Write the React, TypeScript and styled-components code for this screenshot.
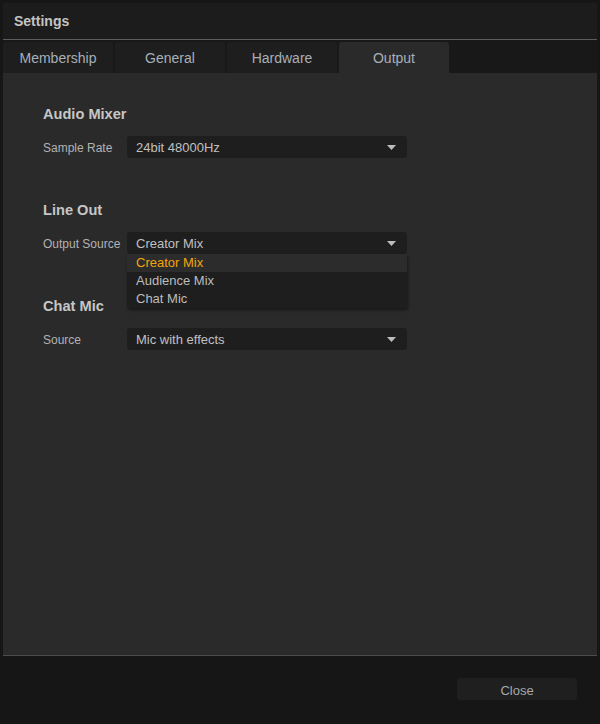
import React from "react";
import styled, { createGlobalStyle } from "styled-components";

const GlobalStyle = createGlobalStyle`
    html, body {
        margin: 0;
        padding: 0;
        background: #161616;
    }
    body {
        font-family: "Liberation Sans", Arial, sans-serif;
    }
`;

const Window = styled.div`
    width: 600px;
    height: 724px;
    display: flex;
    flex-direction: column;
    background: #161616;
    overflow: hidden;
`;

const TitleBar = styled.div`
    margin: 3px 3px 0;
    height: 36px;
    display: flex;
    align-items: center;
    padding-left: 11px;
    background: #1c1c1c;
    color: #c4c4c4;
    font-size: 14px;
    font-weight: bold;
`;

const Rule = styled.div`
    margin: 0 3px;
    height: 1px;
    background: #5c5c5c;
`;

const TabRow = styled.div`
    margin: 0 3px;
    padding-top: 2px;
    display: flex;
    gap: 2px;
    background: #181818;
`;

const Tab = styled.div<{ $active?: boolean }>`
    width: 110px;
    height: 31px;
    display: flex;
    align-items: center;
    justify-content: center;
    border-radius: 3px 3px 0 0;
    background: ${(p) => (p.$active ? "#2a2a2a" : "#1e1e1e")};
    color: #a7afb8;
    font-size: 14px;
`;

const Panel = styled.div`
    margin: 0 3px;
    height: 583px;
    padding: 32px 40px 0;
    box-sizing: border-box;
    background: #2a2a2a;
    border-bottom: 1px solid #4c4c4c;
    display: flex;
    flex-direction: column;
    gap: 43px;
`;

const Section = styled.div`
    display: flex;
    flex-direction: column;
    gap: 13px;
`;

const Heading = styled.div`
    height: 18px;
    line-height: 18px;
    color: #c6c6c6;
    font-size: 14.6px;
    font-weight: bold;
`;

const Row = styled.div`
    display: flex;
    align-items: center;
    height: 22px;
`;

const Label = styled.div`
    width: 84px;
    padding-top: 2px;
    color: #b2b2b2;
    font-size: 12px;
`;

const SelectWrap = styled.div`
    position: relative;
    width: 280px;
`;

const SelectBox = styled.div`
    height: 22px;
    display: flex;
    align-items: center;
    justify-content: space-between;
    padding: 0 11px 0 9px;
    box-sizing: border-box;
    border-radius: 3px;
    background: #1e1e1e;
    color: #c0c0c0;
    font-size: 13px;
`;

const Menu = styled.div`
    position: absolute;
    top: 22px;
    left: 0;
    right: 0;
    z-index: 2;
    background: #1e1e1e;
    box-shadow: 1px 2px 3px rgba(0, 0, 0, 0.45);
`;

const MenuItem = styled.div<{ $selected?: boolean }>`
    height: 18px;
    line-height: 18px;
    padding-left: 9px;
    font-size: 13px;
    color: ${(p) => (p.$selected ? "#f2a50c" : "#bcbcbc")};
    background: ${(p) => (p.$selected ? "#2c2c2c" : "transparent")};
`;

const Footer = styled.div`
    flex: 1;
    display: flex;
    justify-content: flex-end;
    align-items: flex-start;
    padding: 22px 23px 0 0;
`;

const CloseButton = styled.button`
    width: 120px;
    height: 22px;
    border: none;
    border-radius: 3px;
    background: #1f1f1f;
    color: #a8a8a8;
    font-family: "Liberation Sans", Arial, sans-serif;
    font-size: 13px;
    padding: 2px 0 0;
`;

const Caret = () => (
    <svg width="9" height="5" viewBox="0 0 9 5">
        <path d="M0 0H9L4.5 5Z" fill="#bdbdbd" />
    </svg>
);

const Select = ({
    value,
    options,
}: {
    value: string;
    options?: string[];
}) => (
    <SelectWrap>
        <SelectBox>
            <span>{value}</span>
            <Caret />
        </SelectBox>
        {options && (
            <Menu>
                {options.map((o) => (
                    <MenuItem key={o} $selected={o === value}>
                        {o}
                    </MenuItem>
                ))}
            </Menu>
        )}
    </SelectWrap>
);

const tabs = ["Membership", "General", "Hardware", "Output"];

export default function App() {
    return (
        <Window>
            <GlobalStyle />
            <TitleBar>Settings</TitleBar>
            <Rule />
            <TabRow>
                {tabs.map((t) => (
                    <Tab key={t} $active={t === "Output"}>
                        {t}
                    </Tab>
                ))}
            </TabRow>
            <Panel>
                <Section>
                    <Heading>Audio Mixer</Heading>
                    <Row>
                        <Label>Sample Rate</Label>
                        <Select value="24bit 48000Hz" />
                    </Row>
                </Section>
                <Section>
                    <Heading>Line Out</Heading>
                    <Row>
                        <Label>Output Source</Label>
                        <Select
                            value="Creator Mix"
                            options={["Creator Mix", "Audience Mix", "Chat Mic"]}
                        />
                    </Row>
                </Section>
                <Section>
                    <Heading>Chat Mic</Heading>
                    <Row>
                        <Label>Source</Label>
                        <Select value="Mic with effects" />
                    </Row>
                </Section>
            </Panel>
            <Footer>
                <CloseButton>Close</CloseButton>
            </Footer>
        </Window>
    );
}
